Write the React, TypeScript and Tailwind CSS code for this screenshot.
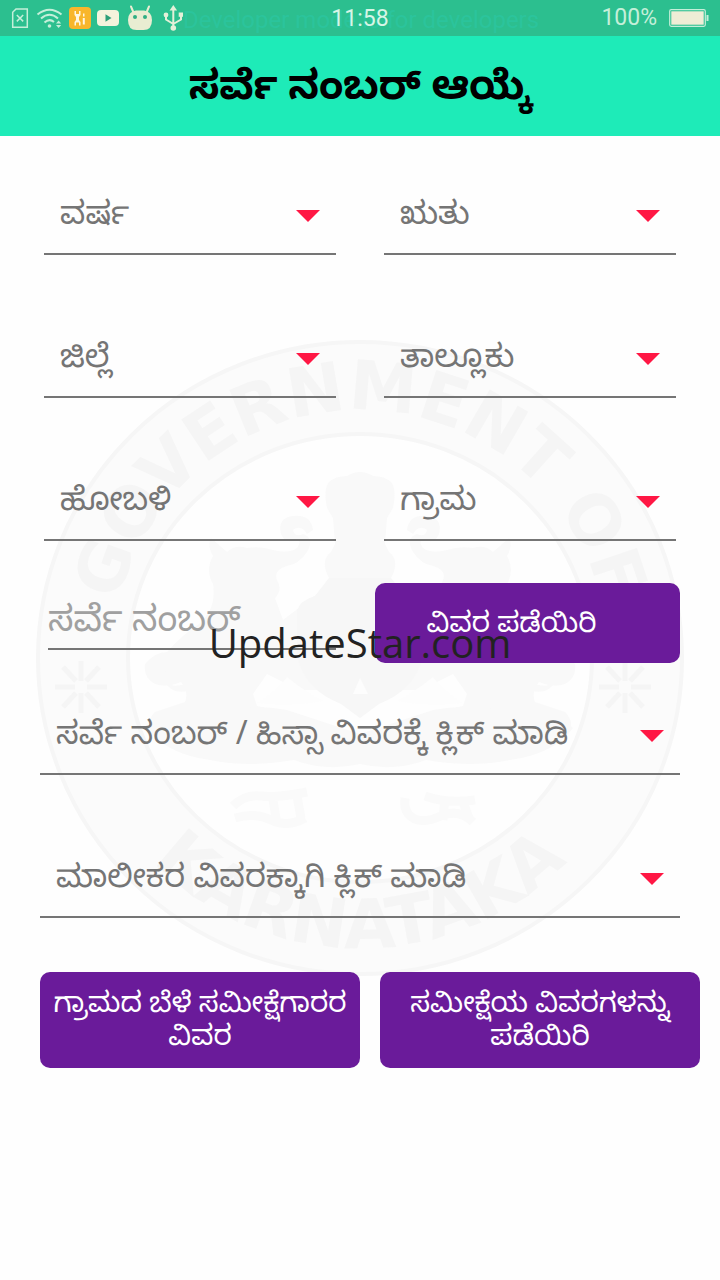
import type { ReactNode } from 'react'

const KANNADA = "font-['Noto_Sans','Noto_Sans_Kannada',sans-serif]"

function SpinnerField({ label }: { label: string }) {
  return (
    <div className="relative border-b-2 border-[#757575]">
      <select
        aria-label={label}
        className="block h-[78px] w-full appearance-none truncate bg-transparent px-4 pb-1 text-[32px] leading-[74px] text-[#757575] outline-none"
      >
        <option>{label}</option>
      </select>
      <svg
        viewBox="0 0 24 12"
        className="pointer-events-none absolute right-4 top-[35px] h-3 w-6"
        fill="#ff1744"
        aria-hidden="true"
      >
        <path d="M0 0h24L12 12z" />
      </svg>
    </div>
  )
}

function PurpleButton({ children, className = '' }: { children: ReactNode; className?: string }) {
  return (
    <button
      type="button"
      className={`rounded-[10px] bg-[#6a1b9a] pb-1 text-center text-[28px] leading-[33px] text-white ${className}`}
    >
      {children}
    </button>
  )
}

function StatusIcons() {
  return (
    <svg viewBox="0 0 190 36" className="h-9 w-[190px] shrink-0" fill="none" aria-hidden="true">
      {/* missing sim */}
      <g stroke="#c4efd9" strokeWidth="1.5">
        <path d="M16 9H27.300V27.300H12.700V12.300Z" />
        <path d="M16.800 15l6.400 6.400M23.200 15l-6.400 6.400" />
      </g>
      {/* wifi */}
      <g stroke="#c4efd9" strokeWidth="2">
        <path d="M37.500 14.500Q49.500 5 61.500 14.500" />
        <path d="M41 18.500Q49.500 11 58 18.500" />
        <path d="M44.500 22.500Q49.500 18 54 22" />
      </g>
      <circle cx="49.500" cy="26" r="1.800" fill="#c4efd9" />
      <path d="M56 23.500l2.600-3 2.600 3zM56 25l2.600 3 2.600-3z" fill="#c4efd9" />
      {/* tools */}
      <rect x="69" y="7" width="22" height="22" rx="4" fill="#f8b62b" />
      <g fill="#fff6df">
        <path d="M74.500 11h1.500v3h3v-3h1.500v4l-1.500 2v3l1.500 2v3.500h-1.500v-3h-3v3h-1.500V22l1.500-2v-3l-1.500-2z" />
        <path d="M83 13.500h1.500v3H83zM82.800 18h2v6.500h-2z" />
      </g>
      {/* video */}
      <rect x="97" y="10" width="22" height="16" rx="4" fill="#f4f3dc" />
      <path d="M105.500 14.300v7.400l6-3.700z" fill="#2b9f78" />
      {/* robot head */}
      <g fill="#e9edd2">
        <path d="M128 20q0-8.500 8-9.500h8q8 1 8 9.500 0 10-8.500 10h-7Q128 30 128 20z" />
        <path d="M131 6.500l2.500 6M149 6.500l-2.500 6" stroke="#e9edd2" strokeWidth="2" strokeLinecap="round" />
      </g>
      <circle cx="135" cy="17" r="2" fill="#2fae83" />
      <circle cx="145" cy="17" r="2" fill="#2fae83" />
      {/* usb */}
      <g stroke="#e4f0d8" strokeWidth="2">
        <path d="M173.300 9v18M166 15v4.500l7.300 4.500M181 14v5.500l-7.700 4.500" />
      </g>
      <g fill="#e4f0d8">
        <path d="M169.500 10.500l3.800-5.500 3.800 5.500z" />
        <circle cx="173.300" cy="28" r="2.800" />
        <circle cx="166" cy="15" r="2.400" />
        <path d="M178.700 12.500h4.300v4.300h-4.300z" />
      </g>
    </svg>
  )
}

function StatusBar() {
  return (
    <div className="relative flex h-9 items-center justify-between bg-[#2cbf8f] pr-[11px] font-[Roboto,sans-serif]">
      <StatusIcons />
      <span className="absolute left-[183px] top-[6px] whitespace-pre text-[24px] leading-[28px] text-[#2bc49c]">
        Developer mode is for developers
      </span>
      <span className="absolute inset-x-0 top-[5px] text-center text-[23px] leading-[28px] text-[#d6f5e6]">11:58</span>
      <div className="flex items-center gap-3 text-[23px] leading-[36px] text-[#c4efd9]">
        <span>100%</span>
        <svg viewBox="0 0 40 18" className="h-[18px] w-10" fill="none" aria-hidden="true">
          <rect x=".7" y=".7" width="35.600" height="16.600" rx="1.500" stroke="#c4efd9" strokeWidth="1.200" />
          <rect x="2.300" y="2.300" width="32.400" height="13.400" fill="#efedd6" />
          <path d="M38.500 6v6" stroke="#c4efd9" strokeWidth="2" />
        </svg>
      </div>
    </div>
  )
}

/** Left half of the emblem; the right one is mirrored round x = 325. */
function Supporter() {
  return (
    <g>
      <path d="M192 214q8-8 20-4 14-2 26 2 16 4 24-2 6-8-2-8-10 4-14-6-4-16 12-18 18-2 20 14l-6 4q-6-10-14-4 2 8 10 4 12 4 4 18-8 12-20 14-14 4-10 14 6 10-2 18l8 22 34-26 34-8v120l-26-16-26 0-32-16-14 20 4 12q30 6 36 14l-30 6q12 14 30 18-20 14-44 8-24-16-48-10-22 4-42-2-18-14-4-28l30-10q4-10-4-20-14 6-26 2-12-6-10-20 10-12 22-12 16-18 32-28 18-16 14-40-8-14 0-28-6-10-2-18z" />
      <path d="M150 346q-20 6-16-10l8-8q-14 0-13 13 6 16 24 12z" />
      <path d="M112 390q16-16 50-12 46-14 90-6l73 24v30q-34 8-66-4-46 8-84 0-44-6-63-32z" />
    </g>
  )
}

function Sparkle({ x }: { x: number }) {
  return (
    <path
      transform={`translate(${x} 349)`}
      d="M-26 0h20M6 0h20M0-26v20M0 6v20M-18-20l13 14M5 6l13 14M18-20l-13 14M-5 6l-13 14"
      stroke="#f5f5f5"
      strokeWidth="5"
    />
  )
}

function Emblem() {
  return (
    <svg viewBox="0 0 650 640" className="w-full" fill="none" aria-hidden="true">
      <ellipse cx="325" cy="320" rx="277" ry="270" stroke="#fbfbfb" strokeWidth="92" />
      <ellipse cx="325" cy="320" rx="322" ry="316" stroke="#f6f6f6" strokeWidth="4" />
      <ellipse cx="325" cy="320" rx="232" ry="224" stroke="#f6f6f6" strokeWidth="4" />
      <defs>
        <path id="arc-top" d="M77 320A248 248 0 0 1 573 320" />
        <path id="arc-bottom" d="M35 320A290 290 0 0 0 615 320" />
      </defs>
      <g fill="#f5f5f5" fontSize="68" fontWeight="bold" textAnchor="middle" fontFamily="DejaVu Sans, sans-serif">
        <text>
          <textPath href="#arc-top" startOffset="50%">GOVERNMENT OF</textPath>
        </text>
        <text>
          <textPath href="#arc-bottom" startOffset="50%">KARNATAKA</textPath>
        </text>
      </g>
      <Sparkle x={46} />
      <Sparkle x={590} />
      <g fill="#f9f9f9">
        <Supporter />
        <g transform="matrix(-1 0 0 1 650 0)">
          <Supporter />
        </g>
        <path d="M294 144q6-6 18-6 13-8 26 0 12 0 18 6 6 8 2 26l-6 10-2 26 4 8q10 8 4 22-4 12-33 12t-33-12q-6-14 4-22l4-8-2-26-6-10q-4-18 2-26z" />
      </g>
      <g fill="#f7f7f7">
        <path d="M294 240h62l14 18q14 4 18 14v46q-8 34-44 48l-19 14-19-14q-36-14-44-48v-46q4-10 18-14z" />
      </g>
      {/* ribbon ends */}
      <g stroke="#fafafa" strokeWidth="9">
        <path d="M198 468q12-12 28-10t46-4M200 480q20-6 36 2t34-2M238 462l4 24M262 458l4 22" />
        <path d="M370 460q-2 14 8 20t28-2 32 6M390 458q22 8 50 4M410 460l-2 22M428 464l6 16" />
      </g>
      <path d="M222 365q20-12 30-26 20 16 36 24-30 6-66 2zM428 365q-20-12-30-26-20 16-36 24 30 6 66 2zM318 356l7-16 8 16z" fill="#fdfdfd" />
    </svg>
  )
}

export default function App() {
  return (
    <div className={`min-h-screen bg-[#fefefe] ${KANNADA}`}>
      <StatusBar />
      <header className="flex h-[100px] items-center justify-center bg-[#1eebb8] pb-1">
        <h1 className="text-[40px] font-bold leading-[60px] text-black">ಸರ್ವೆ ನಂಬರ್ ಆಯ್ಕೆ</h1>
      </header>

      <main className="relative pt-[39px]">
        <div className="pointer-events-none absolute inset-x-[35px] top-[202px]">
          <Emblem />
        </div>

        <form className="relative">
          <div className="grid grid-cols-2 gap-x-12 gap-y-[63px] px-11">
            <SpinnerField label="ವರ್ಷ" />
            <SpinnerField label="ಋತು" />
            <SpinnerField label="ಜಿಲ್ಲೆ" />
            <SpinnerField label="ತಾಲ್ಲೂಕು" />
            <SpinnerField label="ಹೋಬಳಿ" />
            <SpinnerField label="ಗ್ರಾಮ" />
          </div>

          <div className="relative mt-[42px] grid grid-cols-[288fr_305fr] gap-x-[39px] pl-12 pr-10">
            <input
              aria-label="ಸರ್ವೆ ನಂಬರ್"
              placeholder="ಸರ್ವೆ ನಂಬರ್"
              className="h-[67px] min-w-0 border-b-2 border-[#757575] bg-transparent pt-1 text-[36px] leading-[60px] outline-none placeholder:text-[#a0a0a0]"
            />
            <PurpleButton className="h-20 pr-8">ವಿವರ ಪಡೆಯಿರಿ</PurpleButton>
            <span className="pointer-events-none absolute inset-x-0 top-[30px] text-center font-['Open_Sans',sans-serif] text-[40px] leading-[60px] text-[#222222]">
              UpdateStar.com
            </span>
          </div>

          <div className="mt-8 flex flex-col gap-[63px] px-10">
            <SpinnerField label="ಸರ್ವೆ ನಂಬರ್ / ಹಿಸ್ಸಾ ವಿವರಕ್ಕೆ ಕ್ಲಿಕ್ ಮಾಡಿ" />
            <SpinnerField label="ಮಾಲೀಕರ ವಿವರಕ್ಕಾಗಿ ಕ್ಲಿಕ್ ಮಾಡಿ" />
          </div>

          <div className="mt-[54px] grid grid-cols-2 gap-5 pl-10 pr-5">
            <PurpleButton className="h-24">
              ಗ್ರಾಮದ ಬೆಳೆ ಸಮೀಕ್ಷೆಗಾರರ
              <br />
              ವಿವರ
            </PurpleButton>
            <PurpleButton className="h-24">
              ಸಮೀಕ್ಷೆಯ ವಿವರಗಳನ್ನು
              <br />
              ಪಡೆಯಿರಿ
            </PurpleButton>
          </div>
        </form>
      </main>
    </div>
  )
}
